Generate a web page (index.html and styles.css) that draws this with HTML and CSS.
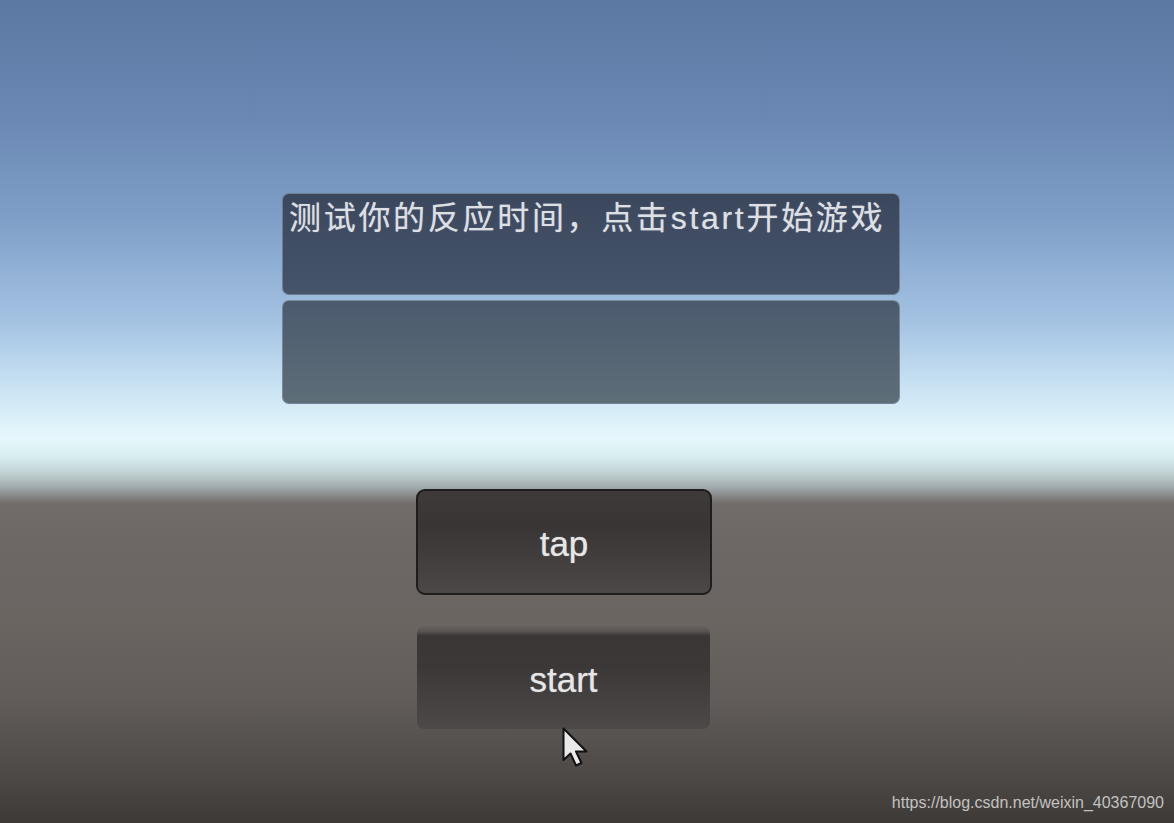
FILE: index.html
```html
<!DOCTYPE html>
<html lang="zh-CN">
<head>
    <meta charset="UTF-8">
    <meta name="viewport" content="width=device-width, initial-scale=1.0">
    <title>反应时间测试</title>
    <link rel="stylesheet" href="styles.css">
</head>
<body>
    <div class="scene">

        <div class="panels">
            <div class="panel panel-info">
                <p class="info-text">测试你的反应时间，点击start开始游戏</p>
            </div>
            <div class="panel panel-result"></div>
        </div>

        <div class="buttons">
            <button class="btn btn-tap" type="button">tap</button>
            <button class="btn btn-start" type="button">start</button>
        </div>

        <!-- ponteiro do mouse por cima do botao -->
        <svg class="cursor" width="28" height="42" viewBox="0 0 28 42">
            <path d="M1.5 1.5 L1.5 33 L8.5 26.5 L14 38.5 L19.5 36 L14 24.5 L24.5 24.5 Z"
                  fill="#e9e9e9" stroke="#111" stroke-width="2" stroke-linejoin="round"/>
        </svg>

        <span class="watermark">https://blog.csdn.net/weixin_40367090</span>
    </div>
</body>
</html>
```

FILE: styles.css
```css
* {
    box-sizing: border-box;
}

body {
    margin: 0;
    padding: 0;
    font-family: "Liberation Sans", Arial, "Noto Sans CJK SC", sans-serif;
}

.scene {
    position: relative;
    width: 1174px;
    height: 823px;
    overflow: hidden;
    padding-top: 193px;
    background:
        linear-gradient(to bottom,
            #5c79a4 0px,
            #6a88b3 120px,
            #7f9fc8 220px,
            #a3c2e2 320px,
            #cbe4f4 390px,
            #e6f8fb 438px,
            #d6ecef 458px,
            #bfcfd1 474px,
            #a1abae 487px,
            #878787 496px,
            #716c6a 504px,
            #6d6866 540px,
            #6a6561 620px,
            #615c59 700px,
            #4c4846 780px,
            #3c3937 823px);
}

.panels {
    display: flex;
    flex-direction: column;
    gap: 5px;
    margin-left: 282px;
    width: 618px;
}

.panel {
    border-radius: 7px;
    border: 1px solid rgba(150, 165, 185, 0.55);
}

.panel-info {
    height: 102px;
    padding: 3px 0 0 6px;
    background: linear-gradient(to bottom, #3b475d, #45546a);
}

.panel-result {
    height: 104px;
    background: linear-gradient(to bottom, #4b5a6e, #5e6e78);
}

.info-text {
    margin: 0;
    font-size: 32px;
    line-height: 42px;
    letter-spacing: 2.7px;
    color: #dcdfe3;
    white-space: nowrap;
    text-shadow: 0 0 1px rgba(220, 225, 230, 0.6);
}

.buttons {
    display: flex;
    flex-direction: column;
    margin-top: 85px;
    margin-left: 416px;
    gap: 31px;
}

.btn {
    font-family: "Liberation Sans", Arial, sans-serif;
    font-size: 35px;
    color: #e6e6e6;
    text-shadow: 0 0 1px rgba(230, 230, 230, 0.7);
    cursor: pointer;
    padding: 4px 0 0 0;
}

.btn-tap {
    width: 296px;
    height: 106px;
    border: 2px solid #1f1d1c;
    border-radius: 9px;
    background: linear-gradient(to bottom, #3d3a39 0%, #383534 35%, #4b4847 100%);
}

.btn-start {
    width: 293px;
    height: 103px;
    margin-left: 1px;
    border: none;
    border-radius: 7px;
    background: linear-gradient(to bottom, #67625f 0px, #5a5553 5px, #393635 10px, #3b3837 40%, #4c4948 100%);
}

.cursor {
    position: absolute;
    left: 562px;
    top: 727px;
    filter: blur(0.4px);
}

.watermark {
    position: absolute;
    right: 10px;
    bottom: 11px;
    font-size: 16px;
    color: #c4c2c0;
}
```
